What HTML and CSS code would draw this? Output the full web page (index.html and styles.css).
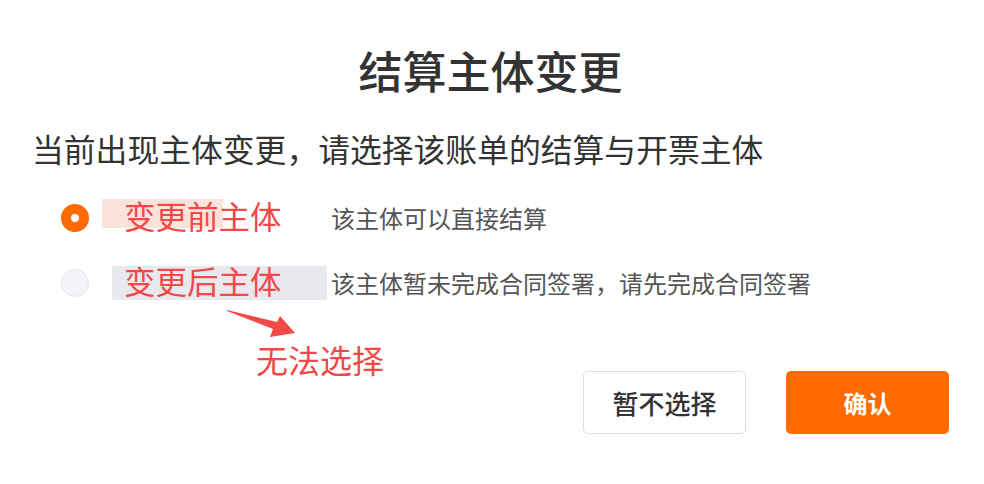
FILE: index.html
```html
<!DOCTYPE html>
<html lang="zh-CN">
<head>
    <meta charset="UTF-8">
    <title>结算主体变更</title>
    <link rel="stylesheet" href="styles.css">
</head>
<body>
    <div class="dialog">
        <h1 class="title">结算主体变更</h1>
        <p class="tip">当前出现主体变更，请选择该账单的结算与开票主体</p>
        <ul class="options">
            <li class="option">
                <span class="radio checked"></span>
                <span class="name">
                    <span class="mask mask-old"></span>
                    <span class="mark">变更前主体</span>
                </span>
                <span class="desc">该主体可以直接结算</span>
            </li>
            <li class="option">
                <span class="radio disabled"></span>
                <span class="name">
                    <span class="mask mask-new"></span>
                    <span class="mark">变更后主体</span>
                </span>
                <span class="desc">该主体暂未完成合同签署，请先完成合同签署</span>
            </li>
        </ul>
        <svg class="arrow" width="90" height="45" viewBox="0 0 90 45">
            <polygon points="7,10 57,22 60,16 75,33 50,37 53,29 7,11" fill="#f24848"/>
        </svg>
        <p class="note">无法选择</p>
        <div class="footer">
            <button class="btn btn-plain">暂不选择</button>
            <button class="btn btn-primary">确认</button>
        </div>
    </div>
</body>
</html>
```

FILE: styles.css
```css
*{
    padding: 0;
    margin: 0;
}
body{
    background: #fff;
    font-family: "Noto Sans CJK SC", "Noto Sans", sans-serif;
    color: #333;
}
.dialog{
    position: relative;
    width: 984px;
    height: 484px;
    padding: 0 35px 0 32px;
    box-sizing: border-box;
}
.title{
    padding-top: 48px;
    text-align: center;
    font-size: 44px;
    line-height: 44px;
    font-weight: 500;
    color: #333;
}
.tip{
    margin-top: 40px;
    font-size: 31.8px;
    line-height: 32px;
    color: #333;
}
.options{
    list-style: none;
    margin-top: 34px;
    padding-left: 29px;
}
.option{
    display: flex;
    align-items: center;
    height: 40px;
    margin-bottom: 25px;
}
.radio{
    width: 28px;
    height: 28px;
    border-radius: 50%;
    box-sizing: border-box;
    flex-shrink: 0;
}
.radio.checked{
    border: 10px solid #ff6a00;
    background: #fff;
}
.radio.disabled{
    border: 1px solid #e4e6ec;
    background: #f3f4f8;
}
.name{
    position: relative;
    width: 229px;
    height: 40px;
    margin-left: 13px;
    flex-shrink: 0;
}
.mask{
    position: absolute;
}
.mask-old{
    left: 0;
    top: 1px;
    width: 121px;
    height: 29px;
    background: #f9e3da;
}
.mask-new{
    left: 10px;
    top: 3px;
    width: 215px;
    height: 34px;
    background: #e8e9ee;
    border-radius: 2px;
}
.mark{
    position: absolute;
    left: 22px;
    top: 0;
    font-size: 31.5px;
    line-height: 34px;
    color: #f24848;
    white-space: nowrap;
}
.desc{
    font-size: 24px;
    line-height: 30px;
    color: #555;
}
.arrow{
    position: absolute;
    left: 220px;
    top: 300px;
}
.note{
    position: absolute;
    left: 256px;
    top: 341px;
    font-size: 32px;
    line-height: 36px;
    color: #f24848;
}
.footer{
    display: flex;
    justify-content: flex-end;
    gap: 40px;
    margin-top: 68px;
}
.btn{
    width: 163px;
    height: 63px;
    border-radius: 5px;
    font-family: inherit;
    font-size: 26px;
    cursor: pointer;
}
.btn-plain{
    background: #fff;
    border: 1px solid #dcdde1;
    color: #333;
    font-weight: 500;
}
.btn-primary{
    background: #ff6a00;
    border: none;
    color: #fff;
    font-size: 24px;
    font-weight: 700;
}
```
